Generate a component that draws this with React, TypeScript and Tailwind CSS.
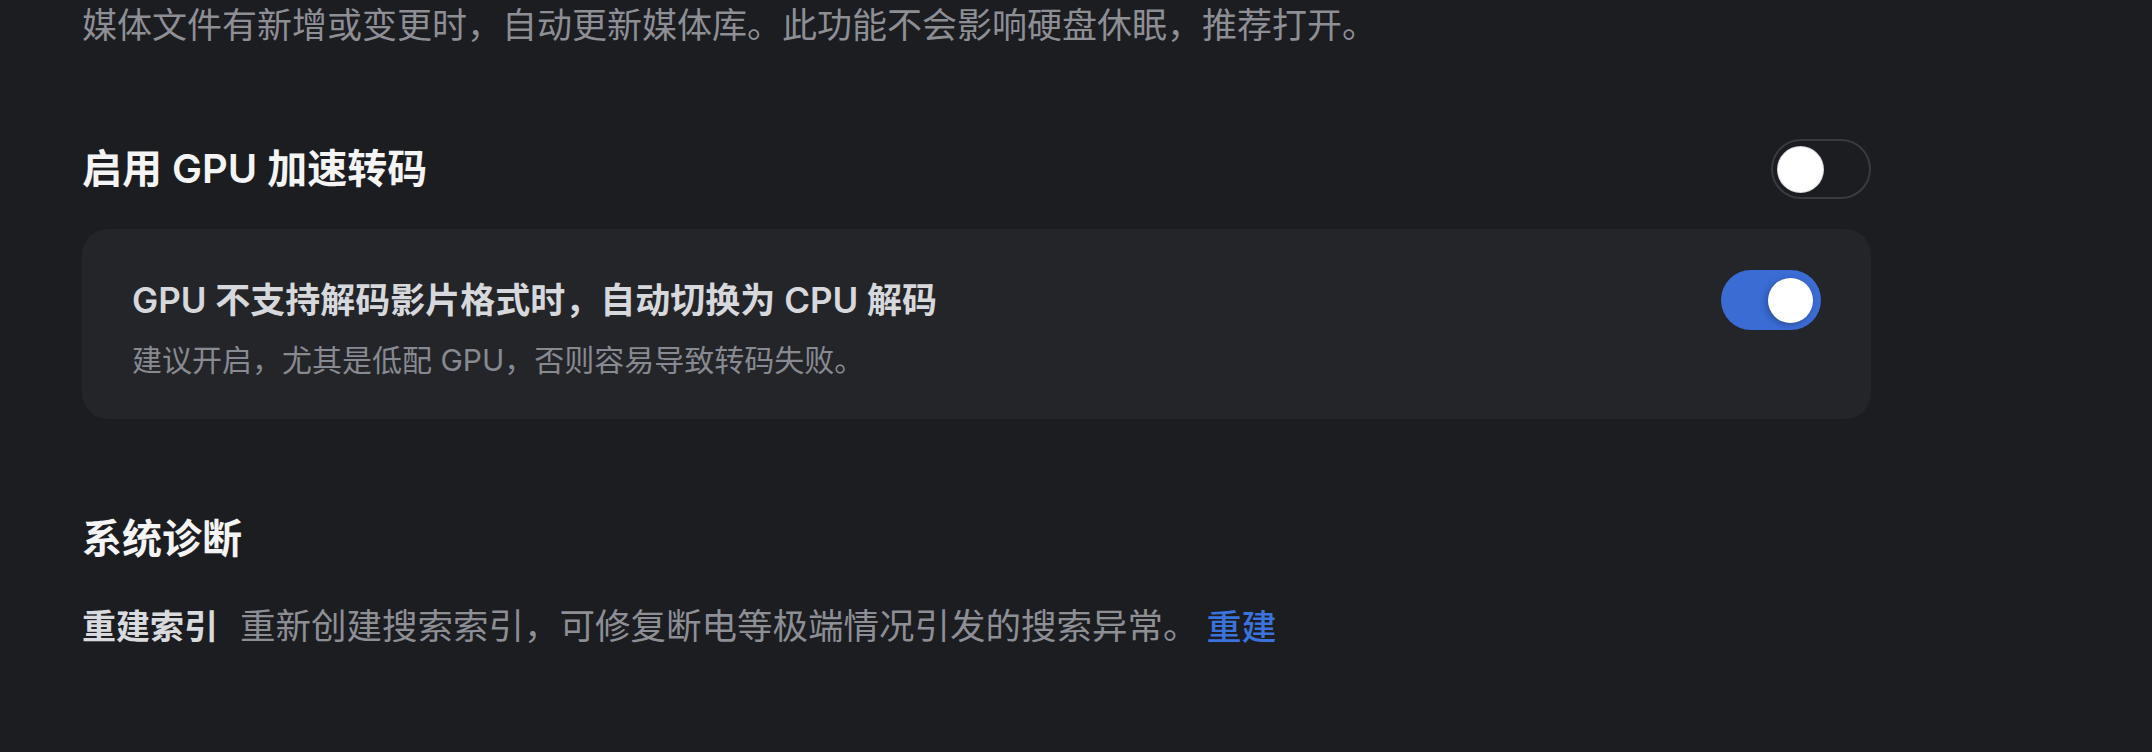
const font = { fontFamily: 'Inter, "Noto Sans CJK SC", sans-serif' };

const Toggle = ({ on }: { on: boolean }) =>
  on ? (
    <div className="flex h-[60px] w-[100px] shrink-0 items-center justify-end rounded-full bg-[#3a6cd4] pr-[8px]">
      <div className="h-[45px] w-[45px] rounded-full bg-white shadow-[-2px_2px_6px_rgba(0,0,0,0.25)]" />
    </div>
  ) : (
    <div className="flex h-[60px] w-[100px] shrink-0 items-center rounded-full border-2 border-[#383b40] pl-[5px]">
      <div className="h-[45px] w-[45px] rounded-full bg-white ring-1 ring-[#d8d9de]" />
    </div>
  );

export default function App() {
  return (
    <div className="h-[752px] w-[2152px] overflow-hidden bg-[#1c1d21] pl-[82px]" style={font}>
      <div className="w-[1789px]">
        <p className="text-[35px] leading-[50px] text-[#8d8f95]">
          媒体文件有新增或变更时，自动更新媒体库。此功能不会影响硬盘休眠，推荐打开。
        </p>

        <div className="mt-[89px] flex h-[60px] items-center justify-between">
          <h2 className="text-[40px] font-semibold text-[#f4f4f5]">启用 GPU 加速转码</h2>
          <Toggle on={false} />
        </div>

        <div className="mt-[30px] rounded-[26px] bg-[#242529] pt-[41px] pr-[50px] pb-[39px] pl-[50px]">
          <div className="flex h-[60px] items-center justify-between">
            <h3 className="text-[35px] font-semibold text-[#d6d8dc]">
              GPU 不支持解码影片格式时，自动切换为 CPU 解码
            </h3>
            <Toggle on={true} />
          </div>
          <p className="mt-[10px] text-[30px] leading-[40px] text-[#878a90]">
            建议开启，尤其是低配 GPU，否则容易导致转码失败。
          </p>
        </div>

        <h2 className="mt-[92px] text-[40px] leading-[56px] font-bold text-[#f4f4f5]">系统诊断</h2>

        <div className="mt-[35px] flex items-center leading-[50px]">
          <span className="text-[34px] font-semibold text-[#d9dadd]">重建索引</span>
          <span className="ml-[22px] text-[35.5px] text-[#8d8f95]">
            重新创建搜索索引，可修复断电等极端情况引发的搜索异常。
          </span>
          <button className="ml-[8px] text-[35px] font-medium text-[#3b73dd]">重建</button>
        </div>
      </div>
    </div>
  );
}
